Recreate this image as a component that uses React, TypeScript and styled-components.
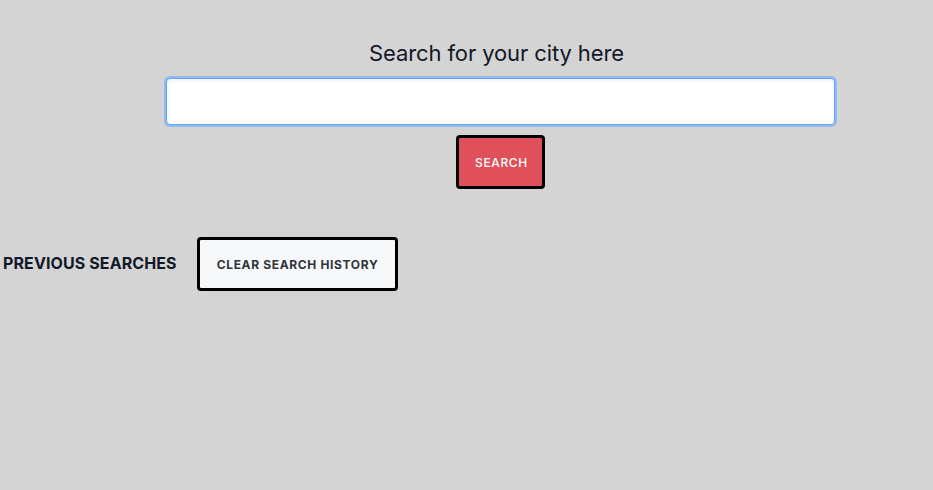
import React from 'react';
import styled, { createGlobalStyle } from 'styled-components';

const GlobalStyle = createGlobalStyle`
  html, body {
    margin: 0;
    padding: 0;
    background-color: #d4d4d4;
    font-family: Inter, "Liberation Sans", sans-serif;
    color: #111827;
  }
`;

const Page = styled.main`
  min-height: 490px;
  display: flex;
  flex-direction: column;
`;

const SearchSection = styled.section`
  display: flex;
  flex-direction: column;
  align-items: center;
  padding: 38px 98px 0 166px;

  h2 {
    margin: 0 8px 10px 0;
    font-size: 22px;
    font-weight: 400;
    line-height: 30px;
    letter-spacing: -0.1px;
  }
`;

const Input = styled.input`
  box-sizing: border-box;
  width: 100%;
  height: 47px;
  padding: 0 12px;
  border: 1px solid #60a5fa;
  border-radius: 4px;
  background: #fff;
  box-shadow: 0 0 0 2px rgba(96, 165, 250, 0.55), inset 0 2px 4px rgba(0, 0, 0, 0.05);
  outline: none;
  font-family: inherit;
  font-size: 16px;
`;

const Button = styled.button<{ $variant?: 'red' | 'light' }>`
  box-sizing: border-box;
  height: 54px;
  padding: 0 ${(p) => (p.$variant === 'red' ? '16px' : '17px')};
  border: 3px solid #000;
  border-radius: 4px;
  background-color: ${(p) => (p.$variant === 'red' ? '#e0505a' : '#f7f8fa')};
  color: ${(p) => (p.$variant === 'red' ? '#fff' : '#2f333b')};
  font-family: inherit;
  font-size: 12px;
  font-weight: ${(p) => (p.$variant === 'red' ? 500 : 700)};
  letter-spacing: 0.65px;
  text-transform: uppercase;
  cursor: pointer;
`;

const SearchButton = styled(Button)`
  margin-top: 10px;
  width: 89px;
`;

const HistoryRow = styled.section`
  display: flex;
  align-items: center;
  gap: 20px;
  margin-top: 48px;
  padding-left: 3px;

  h3 {
    margin: 0 0 3px;
    font-size: 16px;
    font-weight: 700;
    text-transform: uppercase;
    letter-spacing: 0.1px;
  }
`;

const App = () => {
  return (
    <Page>
      <GlobalStyle />
      <SearchSection>
        <h2>Search for your city here</h2>
        <Input type="text" />
        <SearchButton $variant="red">Search</SearchButton>
      </SearchSection>
      <HistoryRow>
        <h3>Previous Searches</h3>
        <Button $variant="light">Clear Search History</Button>
      </HistoryRow>
    </Page>
  );
};

export default App;
